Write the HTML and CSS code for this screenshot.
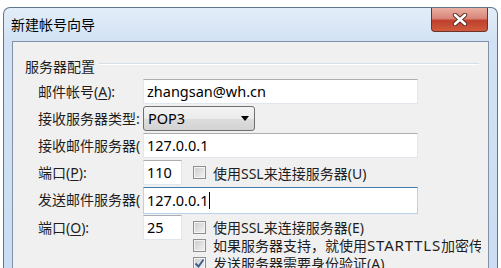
FILE: index.html
```html
<!DOCTYPE html>
<html lang="zh-CN">
<head>
    <meta charset="UTF-8">
    <title>新建帐号向导</title>
    <link rel="stylesheet" href="styles.css">
</head>
<body>
<div class="window">
    <div class="titlebar">
        <span class="title">新建帐号向导</span>
        <span class="close">
            <svg width="16" height="13" viewBox="0 0 16 13">
                <path d="M3 2 L13 11 M13 2 L3 11" stroke="#5b2a24" stroke-width="4.4" stroke-linecap="round"/>
                <path d="M3 2 L13 11 M13 2 L3 11" stroke="#ffffff" stroke-width="2.6" stroke-linecap="round"/>
            </svg>
        </span>
    </div>
    <div class="client">
        <div class="group-head">
            <span>服务器配置</span>
            <span class="etch"></span>
        </div>

        <div class="row">
            <label class="lbl">邮件帐号(<u>A</u>):</label>
            <div class="field wide">zhangsan@wh.cn</div>
        </div>
        <div class="row">
            <label class="lbl">接收服务器类型:</label>
            <div class="combo">POP3<span class="arrow"></span></div>
        </div>
        <div class="row">
            <label class="lbl">接收邮件服务器(</label>
            <div class="field wide">127.0.0.1</div>
        </div>
        <div class="row">
            <label class="lbl">端口(<u>P</u>):</label>
            <div class="field port">110</div>
            <div class="checks">
                <div class="check single"><span class="box"></span>使用SSL来连接服务器(U)</div>
            </div>
        </div>
        <div class="row">
            <label class="lbl">发送邮件服务器(</label>
            <div class="field wide focus">127.0.0.1<span class="caret"></span></div>
        </div>
        <div class="row last">
            <label class="lbl">端口(<u>O</u>):</label>
            <div class="field port">25</div>
            <div class="checks">
                <div class="check first"><span class="box"></span>使用SSL来连接服务器(E)</div>
                <div class="check"><span class="box"></span>如果服务器支持，就使用<span class="wide-latin">STARTTLS</span>加密传输</div>
                <div class="check"><span class="box checked">
                    <svg width="11" height="11" viewBox="0 0 11 11"><path d="M1.5 5.5 L4.5 8.5 L9.5 1.5" fill="none" stroke="#3c5a8a" stroke-width="1.8"/></svg>
                </span>发送服务器需要身份验证(A)</div>
            </div>
        </div>
    </div>
</div>
</body>
</html>
```

FILE: styles.css
```css
html, body {
    margin: 0;
    height: 268px;
    overflow: hidden;
    background-color: #ffffff;
}
body {
    font-family: "Noto Sans", "Noto Sans CJK SC", sans-serif;
    font-size: 14px;
    color: #1e1e1e;
}
.window {
    margin: 7px 0 0 3px;
    width: 495px;
    height: 300px;
    box-sizing: border-box;
    padding: 0 8px;
    border: 1px solid #62758e;
    border-bottom: none;
    border-radius: 7px 7px 0 0;
    background: linear-gradient(to bottom, #e3edf9 0, #d2e2f4 34px, #c9dcf2 100%);
}
.titlebar {
    height: 33px;
    display: flex;
    justify-content: space-between;
    align-items: flex-start;
}
.title {
    margin-left: -1px;
    padding-top: 7px;
    line-height: 20px;
    color: #000000;
}
.close {
    width: 57px;
    height: 24px;
    box-sizing: border-box;
    margin-right: 1px;
    border: 1px solid #6f3128;
    border-top: none;
    border-radius: 0 0 4px 4px;
    background: linear-gradient(to bottom, #eab0a3 0, #d9857a 45%, #c0402c 55%, #cf5b3d 100%);
    display: flex;
    align-items: center;
    justify-content: center;
}
.client {
    height: 260px;
    box-sizing: border-box;
    border: 1px solid #8192a8;
    background-color: #f0f0f0;
    overflow: hidden;
}
.group-head {
    margin: 15px 9px 2px 12px;
    display: flex;
    align-items: center;
    line-height: 20px;
}
.etch {
    flex: 1;
    height: 0;
    margin: -6px 0 0 4px;
    border-top: 1px solid #d5dfe5;
    border-bottom: 1px solid #ffffff;
}
.row {
    display: flex;
    align-items: flex-start;
    height: 25px;
    margin-bottom: 2px;
    padding-left: 25px;
}
.row.last {
    margin-top: 3px;
    height: auto;
}
.lbl {
    width: 105px;
    flex: none;
    line-height: 25px;
    white-space: nowrap;
    overflow: hidden;
}
u {
    text-decoration: underline;
    text-underline-offset: 2px;
}
.field {
    height: 25px;
    box-sizing: border-box;
    padding-left: 3px;
    line-height: 23px;
    font-size: 14.5px;
    color: #000000;
    background-color: #ffffff;
    border: 1px solid #e2e7ee;
    border-top-color: #abadb3;
    white-space: nowrap;
}
.field.wide {
    width: 275px;
}
.field.port {
    width: 39px;
}
.field.focus {
    height: 27px;
    line-height: 25px;
    border-color: #b6d2ec;
    border-top-color: #3d7bad;
}
.caret {
    display: inline-block;
    width: 1px;
    height: 17px;
    margin-left: 1px;
    vertical-align: -3px;
    background-color: #000000;
}
.combo {
    width: 112px;
    height: 25px;
    box-sizing: border-box;
    padding: 0 5px 0 4px;
    line-height: 23px;
    font-size: 14.5px;
    color: #000000;
    border: 1px solid #707070;
    border-radius: 3px;
    background: linear-gradient(to bottom, #f4f4f4 0, #ebebeb 50%, #dddddd 51%, #d3d3d3 100%);
    display: flex;
    align-items: center;
    justify-content: space-between;
}
.arrow {
    width: 0;
    height: 0;
    border-left: 4px solid transparent;
    border-right: 4px solid transparent;
    border-top: 5px solid #000000;
}
.checks {
    width: 288px;
    margin-left: 11px;
    overflow: hidden;
}
.check {
    display: flex;
    align-items: center;
    height: 18px;
    white-space: nowrap;
}
.check.single {
    height: 25px;
}
.check.first {
    margin-top: 3px;
}
.wide-latin {
    font-size: 15px;
    letter-spacing: 0.8px;
}
.box {
    flex: none;
    width: 13px;
    height: 13px;
    box-sizing: border-box;
    margin-right: 7px;
    border: 1px solid #8e8f8f;
    box-shadow: inset 0 0 0 1px #f4f4f4;
    background: linear-gradient(135deg, #cbcbcb 0, #f3f3f3 100%);
    display: flex;
    align-items: center;
    justify-content: center;
}
.box.checked svg {
    display: block;
}
```
